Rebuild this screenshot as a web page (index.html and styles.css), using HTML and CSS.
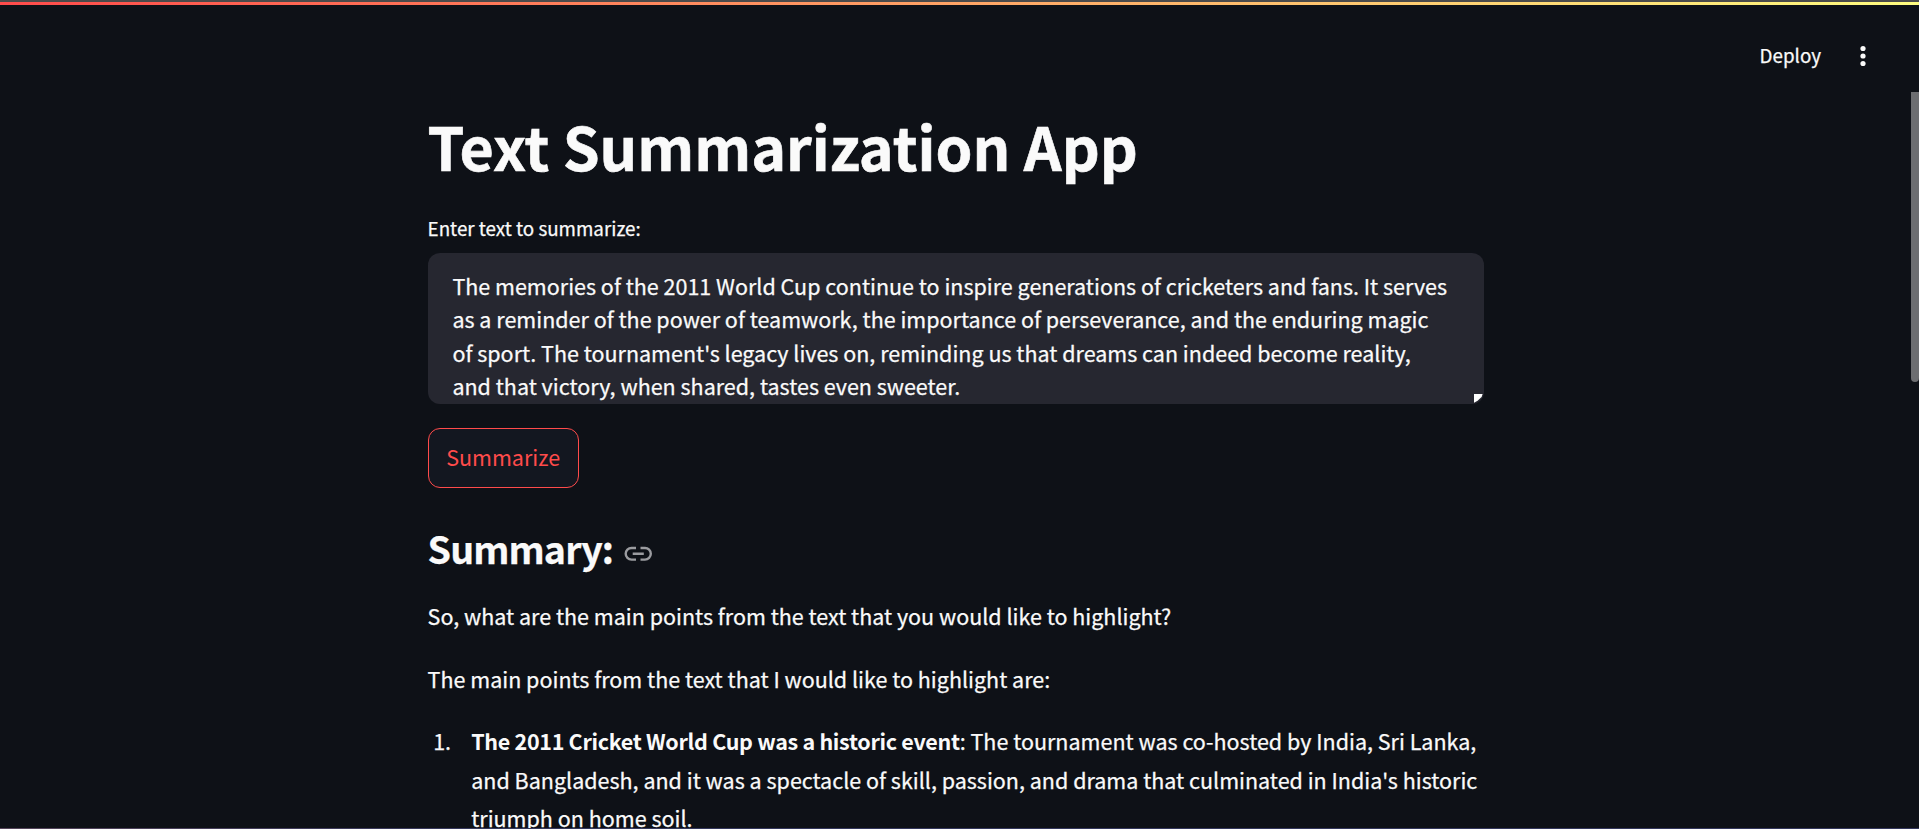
FILE: index.html
```html
<!DOCTYPE html>
<html lang="en">
<head>
<meta charset="utf-8">
<title>Text Summarization App</title>
<link rel="stylesheet" href="styles.css">
</head>
<body>
<div class="app">
  <div class="edge"></div>
  <div class="decoration"></div>
  <header class="toolbar">
    <span class="deploy">Deploy</span>
    <svg class="menu" viewBox="0 0 6 22" width="6" height="22"><circle cx="3" cy="3.500" r="2.600"/><circle cx="3" cy="11" r="2.600"/><circle cx="3" cy="18.500" r="2.600"/></svg>
  </header>
  <div class="viewport">
    <main class="content">
      <h1 class="title"><span>Text Summarization App</span></h1>
      <div class="label"><span>Enter text to summarize:</span></div>
      <div class="textarea">
        <div><span>The memories of the 2011 World Cup continue to inspire generations of cricketers and fans. It serves</span></div>
        <div><span>as a reminder of the power of teamwork, the importance of perseverance, and the enduring magic</span></div>
        <div><span>of sport. The tournament's legacy lives on, reminding us that dreams can indeed become reality,</span></div>
        <div><span>and that victory, when shared, tastes even sweeter.</span></div>
        <i class="grip"></i>
      </div>
      <button class="button">Summarize</button>
      <h2 class="subheader"><span>Summary:</span>
        <svg class="link" viewBox="0 0 28 16" width="28" height="16"><path d="M12 2H7.500a5.800 5.800 0 0 0 0 11.600H12M16.500 2H21a5.800 5.800 0 0 1 0 11.600h-4.500M8.700 7.800H19.800"/></svg>
      </h2>
      <p class="text">So, what are the main points from the text that you would like to highlight?</p>
      <p class="text">The main points from the text that I would like to highlight are:</p>
      <ol class="list">
        <li><span class="num">1.</span><div><b>The 2011 Cricket World Cup was a historic event</b>: The tournament was co-hosted by India, Sri Lanka,<br>and Bangladesh, and it was a spectacle of skill, passion, and drama that culminated in India's historic<br>triumph on home soil.</div></li>
      </ol>
    </main>
    <i class="scrollbar"></i>
  </div>
  <div class="bottom-edge"></div>
</div>
</body>
</html>
```
FILE: styles.css
```css
* { box-sizing: border-box; }
body {
  margin: 0;
  background: #0e1117;
  color: #fafafa;
  font-family: "Noto Sans CJK SC", "Open Sans", sans-serif;
  font-size: 21.5px;
  line-height: 38.4px;
  -webkit-text-stroke: 0.25px;
  overflow: hidden;
}
.app { display: flex; flex-direction: column; height: 829px; }
.edge { height: 2px; background: #4b4b4b; flex: none; }
.decoration { height: 3px; flex: none; background: linear-gradient(90deg, #ff4b4b, #fffd80); }
.toolbar {
  height: 87px; flex: none;
  display: flex; align-items: flex-start; justify-content: flex-end;
  gap: 39px; padding-right: 53px;
}
.deploy { font-size: 18.8px; line-height: 28px; padding-top: 36px; }
.menu { fill: #fafafa; margin-top: 40px; }
.viewport { flex: 1; min-height: 0; display: flex; justify-content: space-between; overflow: hidden; }
.content { width: 1056px; margin-left: 427.6px; display: flex; flex-direction: column; align-items: flex-start; }
.title { margin: 14px 0 0; font-size: 59.1px; font-weight: 700; line-height: 79px; white-space: nowrap; -webkit-text-stroke: 0.6px; }
.label { font-size: 18.8px; line-height: 32px; margin-top: 27px; white-space: nowrap; }
.textarea {
  position: relative; flex: none;
  width: 1056px; height: 151px; margin-top: 9px;
  padding: 16px 0 0 24.8px;
  border-radius: 12px; background: #262730; overflow: hidden;
  line-height: 33.4px; white-space: nowrap;
}
.grip { position: absolute; right: 0; bottom: 1px; width: 10px; height: 9px; background: #fff; clip-path: polygon(0 0, 90% 0, 80% 32%, 40% 75%, 0 100%); }
.button {
  flex: none; width: 146px; height: 60px; margin: 24px 0 0; padding: 0 0 2px;
  min-width: 151px;
  border: 1px solid #ff4b4b; border-radius: 12px;
  background: #131720; color: #ff4b4b; font: inherit; -webkit-text-stroke: 0;
}
.subheader {
  display: flex; align-items: center; gap: 11px;
  margin: 35px 0 0; font-size: 37.6px; font-weight: 600; line-height: 50px; letter-spacing: -0.9px;
}
.link { fill: none; stroke: #9b9ca0; stroke-width: 2.4; margin-top: 12px; }
.text { margin: 24px 0 0; white-space: nowrap; }
.text + .text { margin-top: 24.6px; }
.list { list-style: none; margin: 24px 0 0; padding: 0 0 0 0.6px; white-space: nowrap; }
.list li { display: flex; }
.list b { letter-spacing: -0.31px; -webkit-text-stroke: 0; }
.num { width: 43px; padding-left: 5px; flex: none; }
.scrollbar { width: 8px; height: 290px; background: #6d6e71; border-radius: 0 0 4px 4px; }
.bottom-edge { height: 1px; flex: none; background: linear-gradient(90deg, #55465a, #33375c 25%); }
```
